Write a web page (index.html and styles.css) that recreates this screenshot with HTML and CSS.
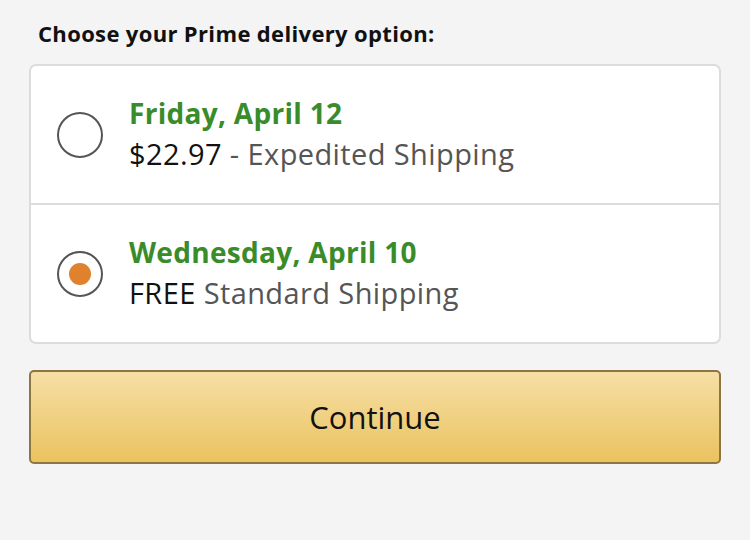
FILE: index.html
```html
<!DOCTYPE html>
<html>
<head>
<meta charset="utf-8">
<link rel="stylesheet" href="styles.css">
</head>
<body>
<main class="page">
  <h1 class="title">Choose your Prime delivery option:</h1>
  <div class="options">
    <label class="option">
      <span class="radio"></span>
      <span class="text">
        <span class="date">Friday, April 12</span>
        <span class="line"><span class="price">$22.97</span> - Expedited Shipping</span>
      </span>
    </label>
    <label class="option">
      <span class="radio checked"></span>
      <span class="text">
        <span class="date">Wednesday, April 10</span>
        <span class="line"><span class="price">FREE</span> Standard Shipping</span>
      </span>
    </label>
  </div>
  <button class="continue">Continue</button>
</main>
</body>
</html>
```
FILE: styles.css
```css
html, body {
  margin: 0;
  padding: 0;
  background: #f4f4f4;
  font-family: "Open Sans", "Noto Sans", sans-serif;
  color: #111;
}
.page {
  padding: 18px 29px 0 29px;
  display: flex;
  flex-direction: column;
}
.title {
  margin: 0 0 16px 9px;
  font-size: 22px;
  letter-spacing: 0.35px;
  font-weight: 700;
  line-height: 30px;
  color: #111;
}
.options {
  background: #fff;
  border: 2px solid #dcdcdc;
  border-radius: 7px;
  display: flex;
  flex-direction: column;
}
.option {
  height: 137px;
  display: flex;
  align-items: center;
  padding-left: 26px;
  gap: 26px;
}
.option + .option {
  border-top: 2px solid #dcdcdc;
}
.radio {
  width: 42px;
  height: 42px;
  border: 2px solid #555;
  border-radius: 50%;
  display: flex;
  align-items: center;
  justify-content: center;
  flex: none;
}
.radio.checked::after {
  content: "";
  width: 22px;
  height: 22px;
  border-radius: 50%;
  background: #e0812d;
}
.text {
  display: flex;
  flex-direction: column;
  margin-top: -2px;
}
.date {
  font-size: 28px;
  letter-spacing: 0.3px;
  font-weight: 700;
  color: #3a8b2a;
  line-height: 40px;
}
.line {
  font-size: 29px;
  letter-spacing: 0.4px;
  color: #555;
  line-height: 41px;
}
.price {
  color: #111;
}
.continue {
  margin-top: 26px;
  height: 94px;
  border: 2px solid #8e7642;
  border-radius: 5px;
  background: linear-gradient(#f6dfa6, #eac35f);
  font-family: "Open Sans", "Noto Sans", sans-serif;
  font-size: 31px;
  color: #111;
  padding: 0;
}
```
